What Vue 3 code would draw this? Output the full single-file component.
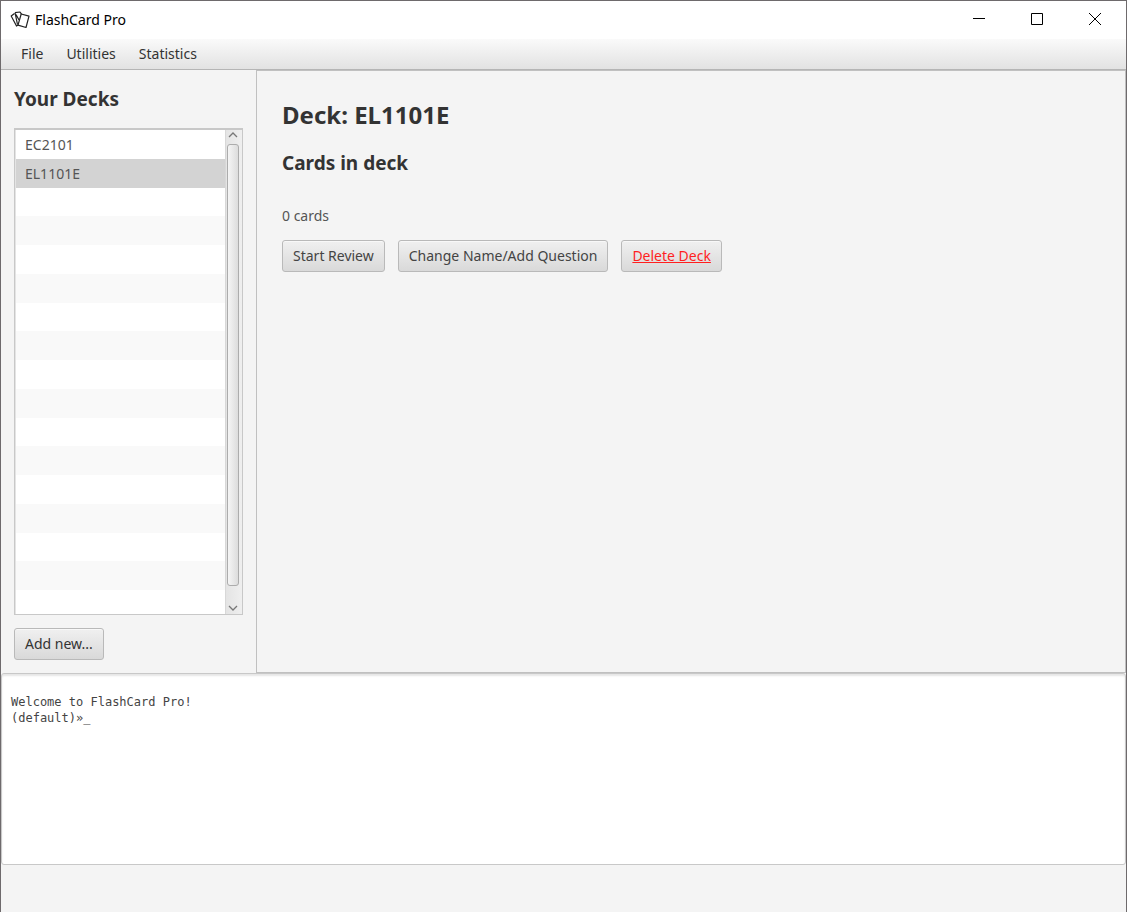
<script setup>
import { ref } from 'vue'

const menus = ['File', 'Utilities', 'Statistics']
const decks = ['EC2101', 'EL1101E']
const selected = ref('EL1101E')
const emptyRows = 15
</script>

<template>
  <div class="window">
    <header class="titlebar">
      <svg class="logo" viewBox="0 0 20 20" aria-hidden="true">
        <path d="M4.500 3.500 1.200 6 6.500 16 8 15" />
        <path d="M5 2.600 10 2 11.500 4.200 M5 2.600 7.500 14.500 M6 4.500 9 10" />
        <path class="card" d="M11.200 4 19 6.200 16 17.500 8 15.200Z" />
      </svg>
      <span class="title">FlashCard Pro</span>
      <div class="controls">
        <button type="button" aria-label="Minimize">
          <svg viewBox="0 0 12 12"><path d="M0 5.500H12" /></svg>
        </button>
        <button type="button" aria-label="Maximize">
          <svg viewBox="0 0 12 12"><path d="M.5 .5H11.500V11.500H.5Z" /></svg>
        </button>
        <button type="button" aria-label="Close">
          <svg viewBox="0 0 12 12"><path d="M0 0 12 12M12 0 0 12" /></svg>
        </button>
      </div>
    </header>

    <nav class="menubar">
      <button v-for="menu in menus" :key="menu" type="button">{{ menu }}</button>
    </nav>

    <main class="workspace">
      <aside class="sidebar">
        <h2>Your Decks</h2>
        <div class="list-box">
          <ul class="rows">
            <li v-for="deck in decks" :key="deck" :class="{ selected: deck === selected }">
              <button type="button" @click="selected = deck">{{ deck }}</button>
            </li>
            <li v-for="n in emptyRows" :key="n"></li>
          </ul>
          <div class="scrollbar" aria-hidden="true">
            <svg viewBox="0 0 10 6"><path d="M1 5 5 1 9 5" /></svg>
            <div class="thumb"></div>
            <svg viewBox="0 0 10 6"><path d="M1 1 5 5 9 1" /></svg>
          </div>
        </div>
        <button type="button" class="btn add">Add new...</button>
      </aside>

      <section class="deck">
        <h1>Deck: {{ selected }}</h1>
        <h2>Cards in deck</h2>
        <p>0 cards</p>
        <div class="actions">
          <button type="button" class="btn">Start Review</button>
          <button type="button" class="btn">Change Name/Add Question</button>
          <button type="button" class="btn delete">Delete Deck</button>
        </div>
      </section>
    </main>

    <section class="console" aria-label="Console">
      <div>Welcome to FlashCard Pro!</div>
      <div>(default)»_</div>
    </section>
    <footer class="status"></footer>
  </div>
</template>

<style>
body {
  margin: 0;
}
</style>

<style scoped>
* {
  box-sizing: border-box;
}
.window {
  display: flex;
  flex-direction: column;
  min-height: 100vh;
  border: 1px solid #6e6a6c;
  border-bottom: 0;
  background: #f4f4f4;
  color: #333;
  font: 14px/20px "Noto Sans", "Open Sans", sans-serif;
}
button {
  font: inherit;
  color: inherit;
  border: 0;
  background: none;
  padding: 0;
  cursor: pointer;
}
h1,
h2,
p,
ul {
  margin: 0;
  padding: 0;
}
.titlebar {
  display: flex;
  align-items: center;
  height: 38px;
  padding-left: 9px;
  background: #fff;
  color: #000;
}
.logo {
  width: 20px;
  height: 20px;
  fill: none;
  stroke: #222;
  stroke-width: 1.2;
  stroke-linejoin: round;
}
.logo .card {
  fill: #fff;
}
.title {
  margin-left: 5px;
}
.controls {
  display: flex;
  margin-left: auto;
  padding: 0 2px 2px 0;
  height: 100%;
}
.controls button {
  display: flex;
  align-items: center;
  justify-content: center;
  width: 58px;
}
.controls svg {
  width: 12px;
  height: 12px;
  fill: none;
  stroke: #000;
}
.menubar {
  display: flex;
  gap: 23px;
  height: 31px;
  padding: 0 20px;
  border-bottom: 1px solid #b5b5b5;
  background: linear-gradient(#fafafa, #e2e2e2);
}
.workspace {
  display: flex;
  flex: 1;
}
.sidebar {
  display: flex;
  flex-direction: column;
  flex: 0 0 255px;
  padding: 16px 13px 13px;
}
.sidebar h2,
.deck h2 {
  font-size: 19px;
  line-height: 26px;
}
.list-box {
  display: flex;
  flex: 1;
  margin: 16px 0 13px;
  border: 1px solid #c8c8c8;
  border-top-width: 2px;
}
.rows {
  display: flex;
  flex: 1;
  flex-direction: column;
  list-style: none;
  border-left: 1px solid #e4e4e4;
}
.rows li {
  display: flex;
  flex: 1 0 0;
  background: #fff;
}
.rows li:nth-child(even) {
  background: #f9f9f9;
}
.rows li:last-child {
  flex: 0 0 24px;
}
.rows li.selected {
  background: #d3d3d3;
}
.rows button {
  flex: 1;
  padding: 2px 0 0 9px;
  text-align: left;
  color: #555;
}
.scrollbar {
  display: flex;
  flex-direction: column;
  align-items: center;
  gap: 4px;
  width: 17px;
  padding: 2px 2px 3px 0;
  border-left: 1px solid #d8d8d8;
  background: linear-gradient(90deg, #e4e4e4, #efefef);
}
.scrollbar svg {
  flex: none;
  width: 10px;
  height: 6px;
  fill: none;
  stroke: #777;
  stroke-width: 1.3;
}
.thumb {
  flex: 1;
  width: 12px;
  margin: 2px 0 15px;
  border: 1px solid #acacac;
  border-radius: 3px;
  background: linear-gradient(90deg, #f5f5f5, #dcdcdc);
}
.btn {
  height: 32px;
  padding: 0 10px 1px;
  border: 1px solid #b9b9b9;
  border-radius: 3px;
  background: linear-gradient(#f0f0f0, #d9d9d9);
  box-shadow: inset 0 1px #f8f8f8;
  color: #444;
}
.add {
  align-self: flex-start;
  color: #333;
}
.deck {
  flex: 1;
  padding: 28px 25px;
  border: 1px solid #c0c0c0;
}
.deck h1 {
  font-size: 24px;
  line-height: 32px;
}
.deck h2 {
  margin-top: 19px;
}
.deck p {
  margin: 30px 0 14px;
  color: #555;
}
.actions {
  display: flex;
  flex-wrap: wrap;
  gap: 13px;
}
.btn.delete {
  color: #ff1f1f;
  text-decoration: underline;
}
.console {
  height: 192px;
  padding: 20px 9px;
  border: 1px solid #c8c8c8;
  border-radius: 3px;
  background: #fff;
  box-shadow: inset 0 2px 2px #e6e6e6;
  color: #444;
  font: 12px/16px "DejaVu Sans Mono", monospace;
}
.status {
  height: 47px;
}
</style>
